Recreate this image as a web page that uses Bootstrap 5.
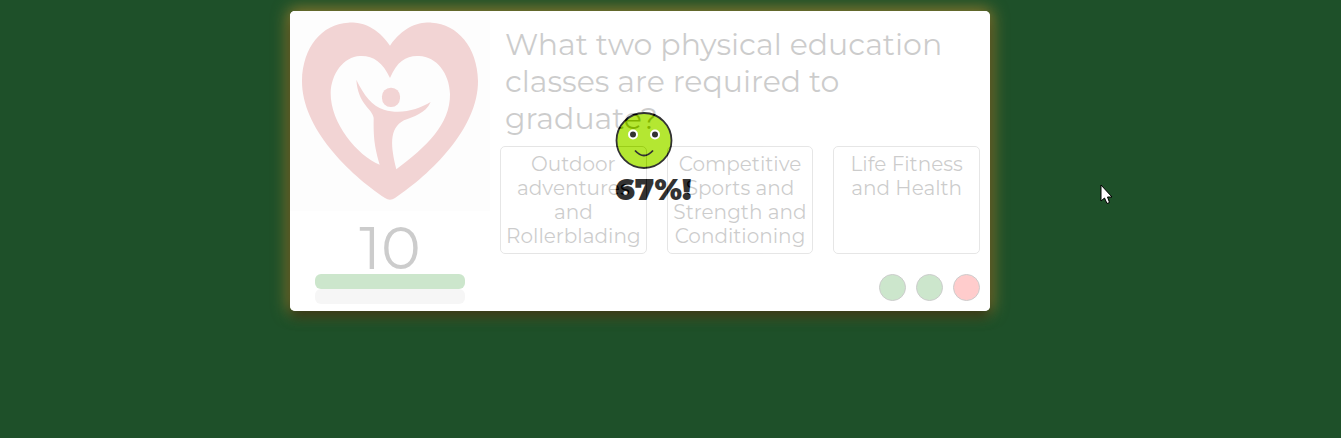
<!DOCTYPE html>
<html lang="en">
<head>
<meta charset="utf-8">
<meta name="viewport" content="width=device-width, initial-scale=1">
<title>Flash quiz</title>
<link href="https://cdn.jsdelivr.net/npm/bootstrap@5.3.0/dist/css/bootstrap.min.css" rel="stylesheet">
<script src="https://cdn.jsdelivr.net/npm/bootstrap@5.3.0/dist/js/bootstrap.bundle.min.js" defer></script>
<style>
  body { background: #1e5029; color: #000; font-family: Montserrat, Inter, sans-serif; font-weight: 400; }
  .stage { padding: 11px 61px 24px 0; }
  .quiz { max-width: 700px; min-height: 300px; border-radius: 5px; background: #fff;
    box-shadow: 0 8px 12px -2px rgba(0,0,0,.5), 0 0 16px 2px rgba(218,150,50,.65); }
  .side { width: 200px; }
  .side svg { display: block; width: 100%; background: #f5f5f5; border-top-left-radius: 5px; }
  .score { font-size: 60px; line-height: 60px; margin: 7px 0 -4px; }
  .meter { width: 150px; height: 15px; border-radius: 6px; background: #d0d0d0; }
  .meter.full { background: #008200; }
  .panel { padding: 0 10px 10px; }
  .question { font-size: 30px; line-height: 37px; font-weight: 400; padding: 15px 5px 9px; margin: 0; }
  .options { display: grid; grid-template-columns: repeat(3, 1fr); gap: 20px; }
  .option { font-size: 20px; line-height: 24px; padding: 5px 0; min-height: 108px;
    border: 1px solid #808080; border-radius: 5px; background: #fff; color: #000;
    display: flex; justify-content: center; align-items: flex-start; }
  .dots { gap: 10px; }
  .dot { width: 27px; height: 27px; border-radius: 50%; border: 1px solid #000; background: #008200; }
  .dot.wrong { background: #f00; }
  .veil { position: absolute; inset: 0; background: #fff; opacity: .8; border-radius: 5px; padding-top: 100px; }
  .verdict { width: 50px; }
  .verdict svg { flex: none; }
  .result { font-size: 30px; line-height: 37px; font-weight: 900; }
  .pointer-mark { position: absolute; left: 1100px; top: 184px; pointer-events: none; }
</style>
</head>
<body>
<main class="stage">
  <section class="quiz position-relative d-flex mx-auto">
    <div class="side flex-shrink-0 d-flex flex-column align-items-center">
      <svg viewBox="60 33 600 600" role="img" aria-label="Heart with a dancing figure" fill="#be2828">
        <path fill-rule="evenodd" d="M360 137C318 76 270 66 235 68C155 72 98 142 96 242C95 385 238 522 345 594Q360 604 375 594C482 522 625 385 624 242C622 142 563 72 485 68C445 66 400 80 360 137ZM360 234C338 185 307 166 270 168C220 170 184 222 182 278C181 370 262 466 329 494C315 443 310 420 311 354C308 325 264 315 259 239C282 286 306 318 342 329C392 344 444 329 482 306C467 340 430 350 402 361C355 386 363 441 379 508C470 440 541 372 540 282C538 220 500 170 447 168C410 166 382 182 360 234Z"/>
        <rect x="336" y="263" width="54" height="58" rx="26"/>
      </svg>
      <div class="score">10</div>
      <div class="meter full"></div>
      <div class="meter"></div>
    </div>
    <div class="panel flex-grow-1 d-flex flex-column">
      <h1 class="question">What two physical education classes are required to graduate?</h1>
      <div class="options">
        <button type="button" class="option">Outdoor adventures and Rollerblading</button>
        <button type="button" class="option">Competitive Sports and Strength and Conditioning</button>
        <button type="button" class="option">Life Fitness and Health</button>
      </div>
      <div class="dots d-flex justify-content-end mt-auto">
        <span class="dot"></span><span class="dot"></span><span class="dot wrong"></span>
      </div>
    </div>
    <div class="veil d-flex justify-content-center">
      <div class="verdict d-flex flex-column align-items-start">
        <svg width="58" height="60" viewBox="1 0 58 60" role="img" aria-label="Smiling face">
          <circle cx="30" cy="29.500" r="27.500" fill="#a2e200" stroke="#000" stroke-width="1.800"/>
          <g fill="#000" stroke="#fff" stroke-width="2"><circle cx="19" cy="23.500" r="4"/><circle cx="41" cy="23.500" r="4"/></g>
          <path d="M21 39.500Q30 49.500 39 39.500" fill="none" stroke="#000" stroke-width="1.800"/>
        </svg>
        <div class="result">67%!</div>
      </div>
    </div>
  </section>
</main>
<svg class="pointer-mark" width="13" height="21" viewBox="0 0 13 21" aria-hidden="true"><path d="M1 1V17L4.500 14L7 19.500L9.500 18.500L7.500 13H12Z" fill="#fff" stroke="#000"/></svg>
</body>
</html>
